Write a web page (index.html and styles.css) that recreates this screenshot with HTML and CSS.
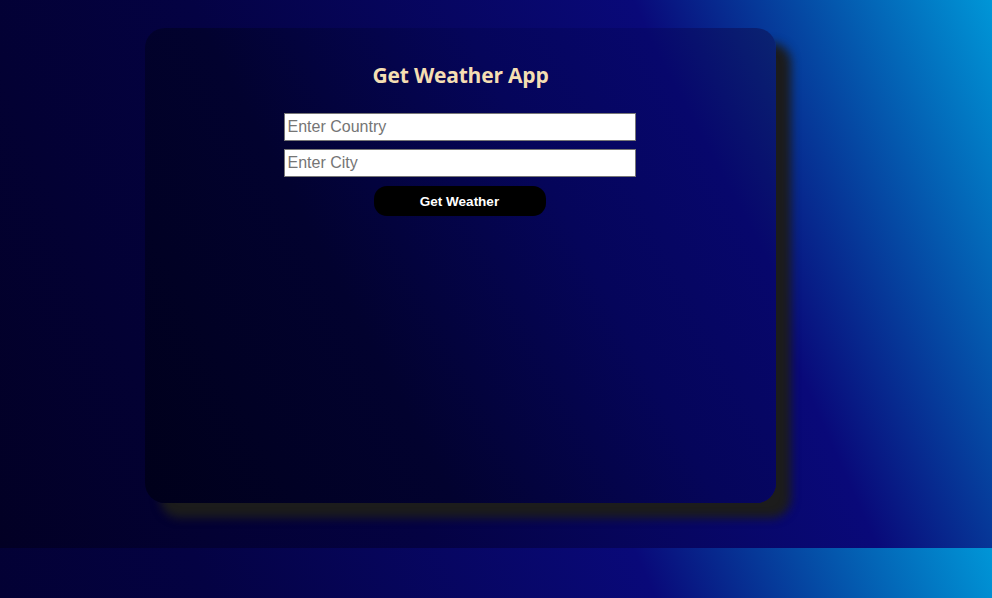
FILE: index.html
```html
<!DOCTYPE html>
<html lang="en">
<head>
<meta charset="utf-8">
<title>Get Weather App</title>
<link rel="stylesheet" href="styles.css">
</head>
<body>
  <main class="card">
    <h1 class="title">Get Weather App</h1>
    <form class="form">
      <input class="field" type="text" placeholder="Enter Country">
      <input class="field" type="text" placeholder="Enter City">
      <button class="btn" type="button">Get Weather</button>
    </form>
  </main>
</body>
</html>
```
FILE: styles.css
```css
html {
  height: 548px;
  background: linear-gradient(66deg, #020024 0%, #040243 35%, #090979 71%, #0096d7 100%);
}

body {
  margin: 0;
  padding: 28px 0 45px 145px;
}

.card {
  box-sizing: border-box;
  width: 631px;
  height: 475px;
  border-radius: 20px;
  background: linear-gradient(62deg, #00001a 0%, #02022f 35%, #05055a 65%, #07076c 85%, #0a2472 100%);
  box-shadow: 15px 15px 10px #1c1c1c;
  padding-top: 32px;
  display: flex;
  flex-direction: column;
  align-items: center;
}

.title {
  margin: 0;
  font-family: "Open Sans", sans-serif;
  font-weight: 700;
  font-size: 21px;
  line-height: 30px;
  color: #f5deb3;
  letter-spacing: -0.2px;
}

.form {
  margin-top: 23px;
  display: flex;
  flex-direction: column;
  align-items: center;
  gap: 8px;
}

.field {
  box-sizing: border-box;
  width: 352px;
  height: 28px;
  margin: 0 2px 0 0;
  padding: 0 3px;
  border: 1px solid #767676;
  border-radius: 0;
  background: #fff;
  font-family: "Liberation Sans", Arial, sans-serif;
  font-size: 16px;
  color: #000;
  outline: none;
}

.field::placeholder {
  color: #757575;
}

.btn {
  width: 172px;
  height: 30px;
  margin: 1px 2px 0 0;
  border: none;
  border-radius: 13px;
  background: #000;
  color: #fff;
  font-family: "Liberation Sans", Arial, sans-serif;
  font-weight: 700;
  font-size: 13.5px;
  cursor: pointer;
}
```
